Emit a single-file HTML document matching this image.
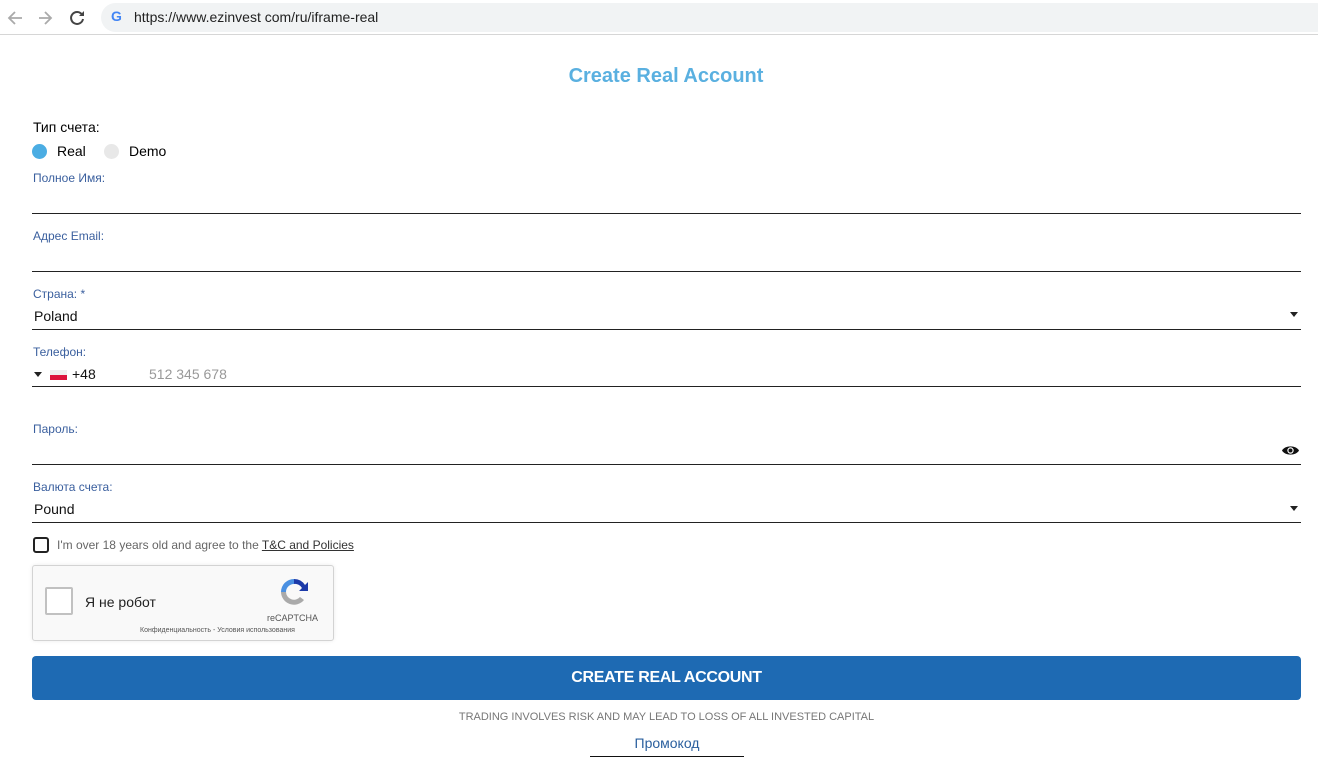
<!DOCTYPE html>
<html><head><meta charset="utf-8"><style>
*{margin:0;padding:0;box-sizing:border-box}
body{width:1318px;height:767px;background:#fff;font-family:"Liberation Sans","Noto Sans CJK SC",sans-serif;position:relative;overflow:hidden;color:#000}
.a{position:absolute}
.lbl{position:absolute;left:33px;font-size:12px;color:#3a5f9e}
.line{position:absolute;left:32px;width:1269px;height:1px;background:#222}
.val{position:absolute;left:34px;font-size:14px;color:#111}
.caret{position:absolute;left:1290px;width:0;height:0;border-left:4px solid transparent;border-right:4px solid transparent;border-top:5px solid #222}
</style></head><body>
<div class="a" style="left:0;top:0;width:1318px;height:35px;background:#fff;border-bottom:1px solid #d6d6d6"></div>
<div class="a" style="left:101px;top:3px;width:1230px;height:29px;background:#f1f3f4;border-radius:15px"></div>
<svg class="a" style="left:5px;top:8px" width="80" height="20" viewBox="0 0 80 20">
<path d="M17 10H5M10 4L4 10l6 6" stroke="#aaa" stroke-width="1.8" fill="none"/>
<path d="M34 10h12M40 4l6 6-6 6" stroke="#aaa" stroke-width="1.8" fill="none"/>
<path d="M77 6.5A6 6 0 1 0 78 11" stroke="#444" stroke-width="2" fill="none"/><path d="M79 3v5h-5z" fill="#444"/>
</svg>
<div class="a" style="left:111px;top:8px;font-size:14px;font-weight:bold;color:#4285f4">G</div>
<div class="a" style="left:134px;top:9px;font-size:14px;color:#222">https://www.ezinvest com/ru/iframe-real</div>

<div class="a" style="left:7px;width:1318px;top:65px;text-align:center;font-size:20px;font-weight:bold;color:#5ab0e0">Create Real Account</div>
<div class="a" style="left:33px;top:119px;font-size:14px">Тип счета:</div>
<div class="a" style="left:32px;top:144px;width:15px;height:15px;border-radius:50%;background:#4bade3"></div>
<div class="a" style="left:57px;top:143px;font-size:14px">Real</div>
<div class="a" style="left:104px;top:144px;width:15px;height:15px;border-radius:50%;background:#e8e8e8"></div>
<div class="a" style="left:129px;top:143px;font-size:14px">Demo</div>

<div class="lbl" style="top:171px">Полное Имя:</div><div class="line" style="top:213px"></div>
<div class="lbl" style="top:229px">Адрес Email:</div><div class="line" style="top:271px"></div>
<div class="lbl" style="top:287px">Страна: *</div><div class="val" style="top:308px">Poland</div><div class="caret" style="top:312px"></div><div class="line" style="top:329px"></div>
<div class="lbl" style="top:345px">Телефон:</div>
<div class="a" style="left:34px;top:372px;border-left:4px solid transparent;border-right:4px solid transparent;border-top:5px solid #222"></div>
<div class="a" style="left:50px;top:370px;width:17px;height:5px;background:#eee"></div><div class="a" style="left:50px;top:375px;width:17px;height:5px;background:#dc143c"></div>
<div class="val" style="top:366px;left:72px">+48</div>
<div class="val" style="top:366px;left:149px;color:#999">512 345 678</div>
<div class="line" style="top:386px"></div>
<div class="lbl" style="top:422px">Пароль:</div>
<svg class="a" style="left:1281px;top:444px" width="19" height="13" viewBox="0 0 19 13"><path d="M1 6.5C4 1 15 1 18 6.5 15 12 4 12 1 6.5z" fill="#111"/><circle cx="9.5" cy="6.5" r="3.2" fill="#fff"/><circle cx="9.5" cy="6.5" r="2" fill="#111"/></svg>
<div class="line" style="top:464px"></div>
<div class="lbl" style="top:480px">Валюта счета:</div><div class="val" style="top:501px">Pound</div><div class="caret" style="top:506px"></div><div class="line" style="top:522px"></div>

<div class="a" style="left:33px;top:537px;width:16px;height:16px;border:2px solid #222;border-radius:3px"></div>
<div class="a" style="left:57px;top:538px;font-size:12px;color:#666">I'm over 18 years old and agree to the <span style="color:#333;text-decoration:underline">T&amp;C and Policies</span></div>

<div class="a" style="left:32px;top:565px;width:302px;height:76px;background:#f9f9f9;border:1px solid #d3d3d3;border-radius:3px;box-shadow:0 0 4px rgba(0,0,0,.08)"></div>
<div class="a" style="left:45px;top:587px;width:28px;height:28px;background:#fff;border:2px solid #c1c1c1;border-radius:2px"></div>
<div class="a" style="left:85px;top:594px;font-size:14px;color:#222">Я не робот</div>
<svg class="a" style="left:278px;top:576px" width="32" height="32" viewBox="0 0 32 32"><path d="M16 3a13 13 0 0 1 11 6l3-3v9h-9l3-3a8 8 0 0 0-8-4z" fill="#1c3aa9"/><path d="M16 3a13 13 0 0 0-13 13h5a8 8 0 0 1 8-8z" fill="#4a90e2"/><path d="M3 16a13 13 0 0 0 23 8l-4-3a8 8 0 0 1-14-5z" fill="#aaa"/></svg>
<div class="a" style="left:267px;top:613px;font-size:9px;color:#555">reCAPTCHA</div>
<div class="a" style="left:140px;top:627px;font-size:7px;color:#555">Конфиденциальность - Условия использования</div>

<div class="a" style="left:32px;top:656px;width:1269px;height:44px;background:#1e6ab3;border-radius:4px;color:#fff;font-weight:bold;font-size:16px;text-align:center;line-height:44px;letter-spacing:-0.3px">CREATE REAL ACCOUNT</div>
<div class="a" style="left:0;width:1333px;top:711px;text-align:center;font-size:11px;color:#777">TRADING INVOLVES RISK AND MAY LEAD TO LOSS OF ALL INVESTED CAPITAL</div>
<div class="a" style="left:590px;width:154px;top:735px;text-align:center;font-size:14px;color:#2a5f9e">Промокод</div>
<div class="a" style="left:590px;top:756px;width:154px;height:1px;background:#111"></div>
</body></html>
